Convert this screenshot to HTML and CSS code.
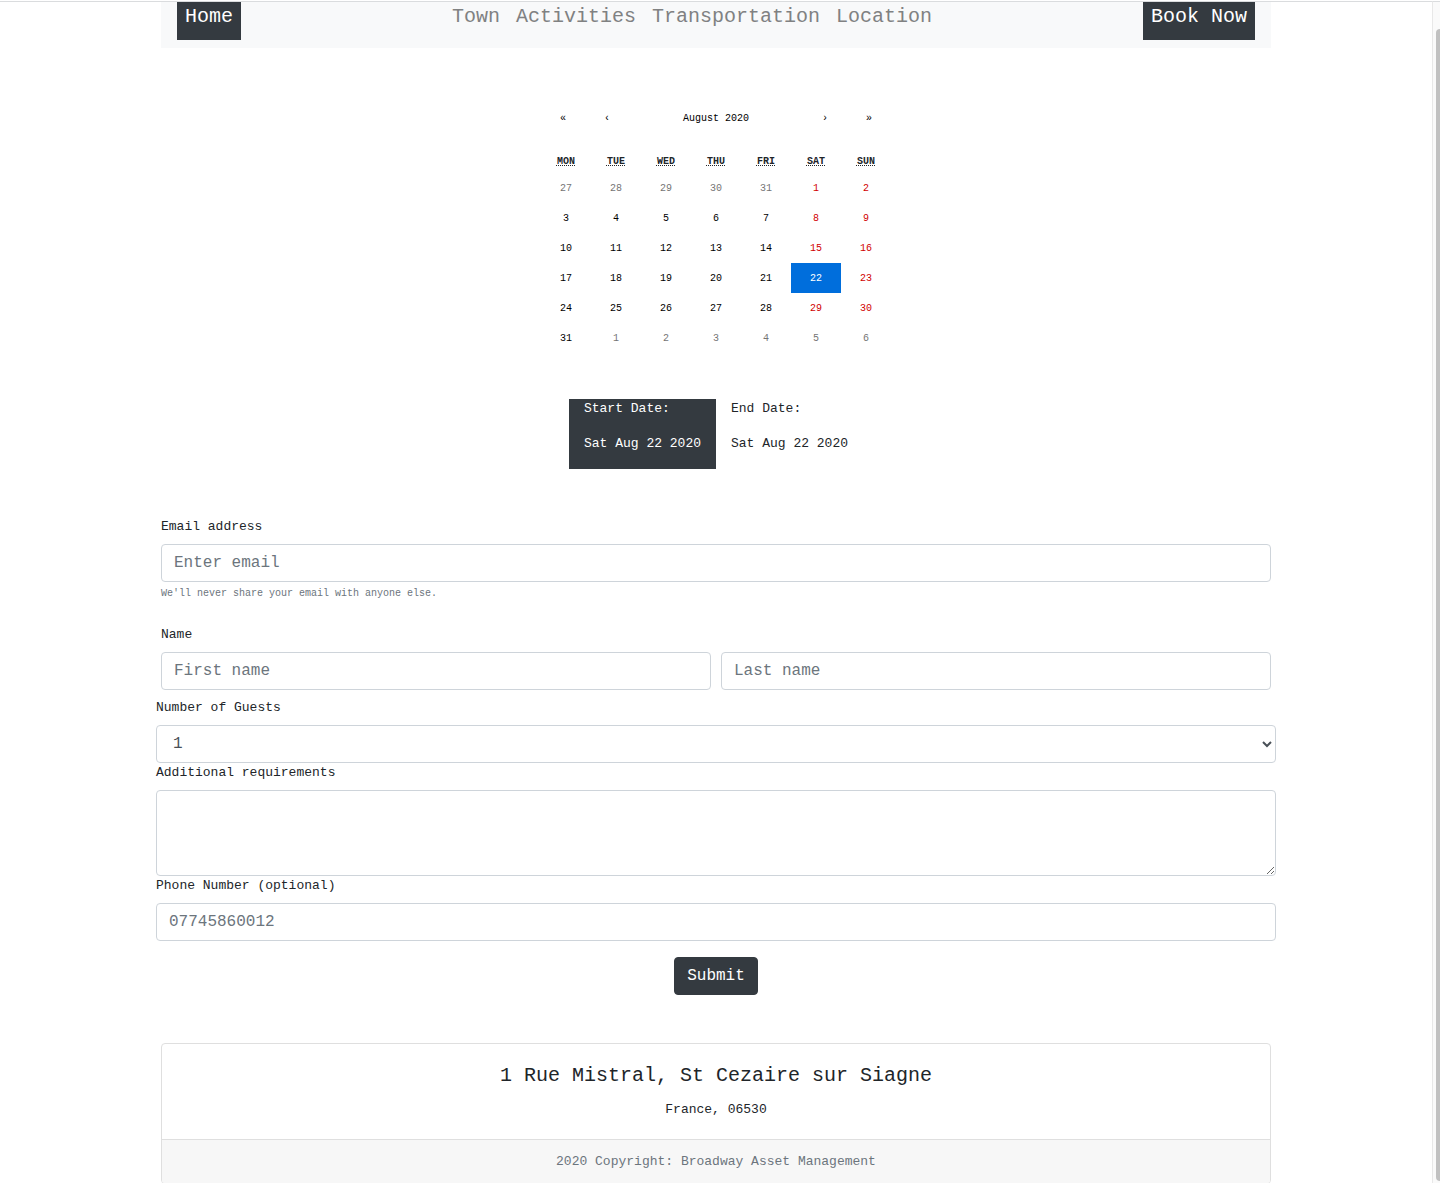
FILE: index.html
```html
<!DOCTYPE html>
<html lang="en">
<head>
<meta charset="utf-8">
<meta name="viewport" content="width=device-width, initial-scale=1">
<title>Book Now</title>
<link rel="stylesheet" href="styles.css">
</head>
<body>
<div class="window">
  <div class="page">
    <div class="container">
      <nav class="navbar" aria-label="Main">
        <a class="nav-link nav-link-dark" href="#home">Home</a>
        <div class="nav-group">
          <a class="nav-link" href="#town">Town</a>
          <a class="nav-link" href="#activities">Activities</a>
          <a class="nav-link" href="#transportation">Transportation</a>
          <a class="nav-link" href="#location">Location</a>
        </div>
        <a class="nav-link nav-link-dark" href="#book">Book Now</a>
      </nav>

      <section class="calendar" aria-label="Calendar">
        <div class="calendar-nav">
          <button type="button" class="calendar-arrow" aria-label="Previous year">«</button>
          <button type="button" class="calendar-arrow" aria-label="Previous month">‹</button>
          <button type="button" class="calendar-label">August 2020</button>
          <button type="button" class="calendar-arrow" aria-label="Next month">›</button>
          <button type="button" class="calendar-arrow" aria-label="Next year">»</button>
        </div>
        <table class="month">
          <thead>
            <tr>
              <th scope="col"><abbr title="Monday">MON</abbr></th>
              <th scope="col"><abbr title="Tuesday">TUE</abbr></th>
              <th scope="col"><abbr title="Wednesday">WED</abbr></th>
              <th scope="col"><abbr title="Thursday">THU</abbr></th>
              <th scope="col"><abbr title="Friday">FRI</abbr></th>
              <th scope="col"><abbr title="Saturday">SAT</abbr></th>
              <th scope="col"><abbr title="Sunday">SUN</abbr></th>
            </tr>
          </thead>
          <tbody>
            <tr>
              <td><button type="button" class="day day-other">27</button></td>
              <td><button type="button" class="day day-other">28</button></td>
              <td><button type="button" class="day day-other">29</button></td>
              <td><button type="button" class="day day-other">30</button></td>
              <td><button type="button" class="day day-other">31</button></td>
              <td><button type="button" class="day day-weekend">1</button></td>
              <td><button type="button" class="day day-weekend">2</button></td>
            </tr>
            <tr>
              <td><button type="button" class="day">3</button></td>
              <td><button type="button" class="day">4</button></td>
              <td><button type="button" class="day">5</button></td>
              <td><button type="button" class="day">6</button></td>
              <td><button type="button" class="day">7</button></td>
              <td><button type="button" class="day day-weekend">8</button></td>
              <td><button type="button" class="day day-weekend">9</button></td>
            </tr>
            <tr>
              <td><button type="button" class="day">10</button></td>
              <td><button type="button" class="day">11</button></td>
              <td><button type="button" class="day">12</button></td>
              <td><button type="button" class="day">13</button></td>
              <td><button type="button" class="day">14</button></td>
              <td><button type="button" class="day day-weekend">15</button></td>
              <td><button type="button" class="day day-weekend">16</button></td>
            </tr>
            <tr>
              <td><button type="button" class="day">17</button></td>
              <td><button type="button" class="day">18</button></td>
              <td><button type="button" class="day">19</button></td>
              <td><button type="button" class="day">20</button></td>
              <td><button type="button" class="day">21</button></td>
              <td><button type="button" class="day day-selected">22</button></td>
              <td><button type="button" class="day day-weekend">23</button></td>
            </tr>
            <tr>
              <td><button type="button" class="day">24</button></td>
              <td><button type="button" class="day">25</button></td>
              <td><button type="button" class="day">26</button></td>
              <td><button type="button" class="day">27</button></td>
              <td><button type="button" class="day">28</button></td>
              <td><button type="button" class="day day-weekend">29</button></td>
              <td><button type="button" class="day day-weekend">30</button></td>
            </tr>
            <tr>
              <td><button type="button" class="day">31</button></td>
              <td><button type="button" class="day day-other">1</button></td>
              <td><button type="button" class="day day-other">2</button></td>
              <td><button type="button" class="day day-other">3</button></td>
              <td><button type="button" class="day day-other">4</button></td>
              <td><button type="button" class="day day-other">5</button></td>
              <td><button type="button" class="day day-other">6</button></td>
            </tr>
          </tbody>
        </table>
      </section>

      <div class="dates">
        <div class="date date-active">
          <p>Start Date:</p>
          <p>Sat Aug 22 2020</p>
        </div>
        <div class="date">
          <p>End Date:</p>
          <p>Sat Aug 22 2020</p>
        </div>
      </div>

      <form class="booking">
        <div class="field">
          <label for="email">Email address</label>
          <input class="control" id="email" type="email" placeholder="Enter email" aria-describedby="email-hint">
          <small class="hint" id="email-hint">We'll never share your email with anyone else.</small>
        </div>
        <div class="field field-name">
          <label for="first-name">Name</label>
          <div class="name-row">
            <input class="control" id="first-name" type="text" placeholder="First name">
            <input class="control" id="last-name" type="text" placeholder="Last name" aria-label="Last name">
          </div>
        </div>
        <div class="details">
          <div class="field">
            <label for="guests">Number of Guests</label>
            <select class="control control-select" id="guests">
              <option>1</option>
              <option>2</option>
              <option>3</option>
              <option>4</option>
            </select>
          </div>
          <div class="field">
            <label for="requirements">Additional requirements</label>
            <textarea class="control control-area" id="requirements" rows="3"></textarea>
          </div>
          <div class="field">
            <label for="phone">Phone Number (optional)</label>
            <input class="control" id="phone" type="tel" placeholder="07745860012">
          </div>
        </div>
        <button class="submit" type="submit">Submit</button>
      </form>

      <footer class="card">
        <div class="card-body">
          <h5 class="card-title">1 Rue Mistral, St Cezaire sur Siagne</h5>
          <p class="card-text">France, 06530</p>
        </div>
        <div class="card-footer">2020 Copyright: Broadway Asset Management</div>
      </footer>
    </div>
  </div>
  <div class="scrollbar" aria-hidden="true"><div class="scrollbar-thumb"></div></div>
</div>
</body>
</html>
```
FILE: styles.css
```css
*,
*::before,
*::after {
  box-sizing: border-box;
}

body {
  margin: 0;
  background: #fff;
  color: #212529;
  font-family: "Courier New", "Liberation Mono", monospace;
  font-size: 13px;
  line-height: 19px;
}

p,
h5 {
  margin: 0;
}

button,
input,
select,
textarea {
  font-family: inherit;
  margin: 0;
}

.window {
  display: flex;
  height: 100vh;
  padding-top: 1px;
}

.page {
  flex: 1;
  min-width: 0;
  border-top: 1px solid #dadcde;
  overflow-y: auto;
  scrollbar-width: none;
}

.scrollbar {
  width: 8px;
  padding: 27px 0 2px 3px;
  border-top: 1px solid #dadcde;
  border-left: 1px solid #e8e8e8;
  background: #fafafa;
  overflow: hidden;
}

.scrollbar-thumb {
  width: 8px;
  height: 100%;
  border-radius: 4px;
  background: #c1c1c1;
}

.container {
  max-width: 1140px;
  margin: 0 auto;
  padding: 0 15px;
}

/* Navigation */

.navbar {
  display: flex;
  justify-content: space-between;
  padding: 0 16px 8px;
  background: #f8f9fa;
}

.nav-group {
  display: flex;
}

.nav-link {
  padding: 0 8px 8px;
  color: #808182;
  font-size: 20px;
  line-height: 30px;
  text-decoration: none;
}

.nav-link-dark {
  background: #343a40;
  color: #fff;
}

/* Calendar */

.calendar {
  width: 350px;
  max-width: 100%;
  margin: 48px auto 0;
}

.calendar-nav {
  display: flex;
  height: 44px;
  margin-bottom: 10px;
}

.calendar-nav button,
.day {
  padding: 0;
  border: 0;
  background: none;
  color: #000;
  font-size: 10px;
}

.calendar-arrow {
  width: 44px;
}

.calendar-label {
  flex: 1;
}

.month {
  width: 100%;
  border-collapse: collapse;
  table-layout: fixed;
  font-size: 10px;
}

.month th {
  height: 23px;
  padding: 0;
  line-height: 23px;
}

.month abbr {
  text-decoration: underline dotted;
}

.month td {
  padding: 0;
}

.day {
  display: block;
  width: 100%;
  height: 30px;
}

.day.day-other {
  color: #757575;
}

.day.day-weekend {
  color: #d10000;
}

.day.day-selected {
  background: #006edc;
  color: #fff;
}

/* Chosen dates */

.dates {
  display: flex;
  justify-content: center;
  margin: 46px 0 48px;
}

.date {
  display: grid;
  gap: 16px;
  padding: 0 15px 16px;
}

.date-active {
  background: #343a40;
  color: #fff;
}

/* Booking form */

.booking {
  display: flex;
  flex-direction: column;
}

.field {
  display: flex;
  flex-direction: column;
}

.field label {
  margin-bottom: 8px;
}

.field-name {
  margin: 23px 0 8px;
}

.name-row {
  display: grid;
  grid-template-columns: 1fr 1fr;
  gap: 10px;
}

.details {
  margin: 0 -5px;
}

.control {
  width: 100%;
  height: 38px;
  padding: 6px 12px;
  border: 1px solid #ced4da;
  border-radius: 4px;
  background: #fff;
  color: #495057;
  font-size: 16px;
  line-height: 24px;
}

.control::placeholder {
  color: #6c757d;
  opacity: 1;
}

.control-area {
  height: 86px;
  resize: vertical;
}

.hint {
  margin-top: 4px;
  color: #6c757d;
  font-size: 10px;
  line-height: 16px;
}

.submit {
  align-self: center;
  margin-top: 16px;
  padding: 6px 12px;
  border: 1px solid #343a40;
  border-radius: 4px;
  background: #343a40;
  color: #fff;
  font-size: 16px;
  line-height: 24px;
}

/* Address card */

.card {
  margin-top: 48px;
  border: 1px solid #dfdfdf;
  border-radius: 4px;
  overflow: hidden;
  text-align: center;
}

.card-body {
  padding: 20px;
}

.card-title {
  margin-bottom: 12px;
  font-size: 20px;
  font-weight: 500;
  line-height: 24px;
}

.card-footer {
  padding: 12px 20px;
  border-top: 1px solid #dfdfdf;
  background: #f7f7f7;
  color: #6c757d;
}
```
